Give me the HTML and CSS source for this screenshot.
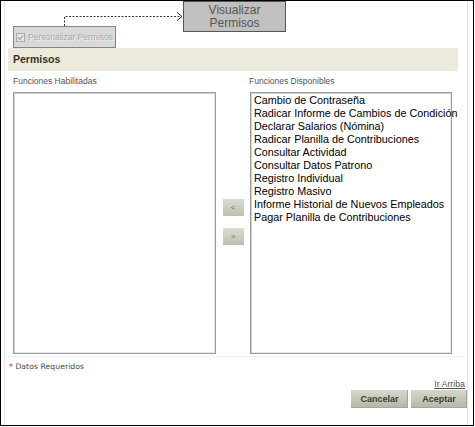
FILE: index.html
```html
<!DOCTYPE html>
<html lang="es">
<head>
<meta charset="utf-8">
<title>Permisos</title>
<link rel="stylesheet" href="styles.css">
</head>
<body>
<div class="frame">
  <div class="page">
    <div class="top">
      <div class="personalizar">
        <span class="chk"><svg width="9" height="9" viewBox="0 0 9 9"><rect x="0.5" y="0.5" width="8" height="8" fill="#e4e4e4" stroke="#a9a9a9"/><path d="M2 4.5 L3.8 6.3 L7 2.6" fill="none" stroke="#a9a9a9" stroke-width="1.3"/></svg></span>
        <span class="plabel">Personalizar Permisos</span>
      </div>
    </div>
    <div class="bar">Permisos</div>
    <div class="cols">
      <div class="col">
        <div class="label">Funciones Habilitadas</div>
        <div class="listbox"></div>
      </div>
      <div class="col mid">
        <button class="move">&lt;</button>
        <button class="move">&gt;</button>
      </div>
      <div class="col">
        <div class="label lbl-right">Funciones Disponibles</div>
        <div class="listbox">
          <div class="opt">Cambio de Contraseña</div>
          <div class="opt">Radicar Informe de Cambios de Condición</div>
          <div class="opt">Declarar Salarios (Nómina)</div>
          <div class="opt">Radicar Planilla de Contribuciones</div>
          <div class="opt">Consultar Actividad</div>
          <div class="opt">Consultar Datos Patrono</div>
          <div class="opt">Registro Individual</div>
          <div class="opt">Registro Masivo</div>
          <div class="opt">Informe Historial de Nuevos Empleados</div>
          <div class="opt">Pagar Planilla de Contribuciones</div>
        </div>
      </div>
    </div>
    <div class="req"><span class="ast">*</span> Datos Requeridos</div>
    <div class="arriba"><a href="#">Ir Arriba</a></div>
    <div class="actions">
      <button class="btn btn-cancel">Cancelar</button>
      <button class="btn btn-ok">Aceptar</button>
    </div>
  </div>
  <svg class="arrow" width="130" height="20" viewBox="0 0 130 20">
    <path d="M4.5 16 V6.5 H122" fill="none" stroke="#333" stroke-width="1" stroke-dasharray="2 1.5"/>
    <path d="M117 2.5 L122 6.5 L117 10.5" fill="none" stroke="#333" stroke-width="1"/>
  </svg>
  <div class="callout">Visualizar<br>Permisos</div>
</div>
</body>
</html>
```
FILE: styles.css
```css
html, body {
  margin: 0;
  padding: 0;
  background: #fff;
}
body {
  font-family: "Liberation Sans", Arial, sans-serif;
}
.frame {
  position: relative;
  width: 472px;
  height: 424px;
  border: 1px solid #000;
  background: #fff;
}
.page {
  margin: 0 5px 0 3px;
  height: 100%;
  border-left: 1px solid #e6e6e6;
  border-right: 1px solid #e2e2e2;
  box-sizing: border-box;
}
.top {
  height: 47px;
  padding: 25px 0 0 8px;
  box-sizing: border-box;
}
.personalizar {
  width: 103px;
  height: 22px;
  box-sizing: border-box;
  border: 1px solid #858585;
  background: #d9d9d9;
  display: flex;
  align-items: center;
  padding-left: 2px;
  gap: 3px;
}
.chk {
  display: flex;
  width: 9px;
  height: 9px;
}
.plabel {
  font-size: 8.5px;
  color: #a8a8a8;
  white-space: nowrap;
  text-shadow: 1px 1px 0 #f0f0f0;
}
.bar {
  margin: 0 9px 0 3px;
  height: 23px;
  line-height: 23px;
  background: #ecebdb;
  padding-left: 5px;
  font-size: 10.5px;
  font-weight: bold;
  color: #333322;
}
.cols {
  display: grid;
  grid-template-columns: 203px 34px 202px;
  padding: 4px 0 2px 8px;
  margin-right: 2px;
  border-bottom: 1px solid #f0f0f0;
}
.col {
  display: flex;
  flex-direction: column;
}
.label {
  height: 12px;
  line-height: 12px;
  font-size: 8.5px;
  color: #555;
  margin-bottom: 5px;
  white-space: nowrap;
}
.lbl-right {
  margin-left: -1px;
}
.listbox {
  height: 262px;
  box-sizing: border-box;
  border: 1px solid #9c9c9c;
  box-shadow: inset 1px 1px 0 #cfcfcf, inset -1px -1px 0 #e6e6e6;
  background: #fff;
  padding: 1px 0 0 3px;
}
.opt {
  font-size: 10.8px;
  line-height: 13px;
  color: #000;
  white-space: nowrap;
}
.mid {
  align-items: center;
  padding-top: 124px;
  gap: 12px;
}
.move {
  width: 21px;
  height: 17px;
  padding: 0;
  border: none;
  background: linear-gradient(#d9ddd0, #bcc1ae);
  font-family: "Liberation Sans", Arial, sans-serif;
  font-size: 8px;
  color: #6b6f60;
  line-height: 17px;
}
.req {
  margin-top: 5px;
  padding-left: 4px;
  height: 10px;
  line-height: 10px;
  font-family: "DejaVu Sans", Verdana, sans-serif;
  font-size: 7.6px;
  color: #444;
  letter-spacing: 0.1px;
}
.ast {
  color: #d22;
}
.arriba {
  margin-top: 5px;
  height: 10px;
  line-height: 10px;
  text-align: right;
  padding-right: 2px;
}
.arriba a {
  font-size: 8.8px;
  color: #555;
  text-decoration: underline;
}
.actions {
  margin-top: 3px;
  display: flex;
  justify-content: flex-end;
  gap: 3px;
}
.btn {
  height: 18px;
  padding: 0;
  border: none;
  background: linear-gradient(#d5d8cb, #b3b8a5);
  box-shadow: inset -1px -1px 0 #a3a893;
  font-family: "Liberation Sans", Arial, sans-serif;
  font-weight: bold;
  font-size: 9px;
  color: #3b3d33;
}
.btn-cancel {
  width: 57px;
}
.btn-ok {
  width: 56px;
}
.arrow {
  position: absolute;
  left: 59px;
  top: 9px;
}
.callout {
  position: absolute;
  left: 182px;
  top: 0;
  width: 103px;
  height: 31px;
  box-sizing: border-box;
  border: 1px solid #555;
  background: #c0c0c0;
  text-align: center;
  font-size: 12px;
  line-height: 13px;
  padding-top: 2px;
  color: #555;
}
```
